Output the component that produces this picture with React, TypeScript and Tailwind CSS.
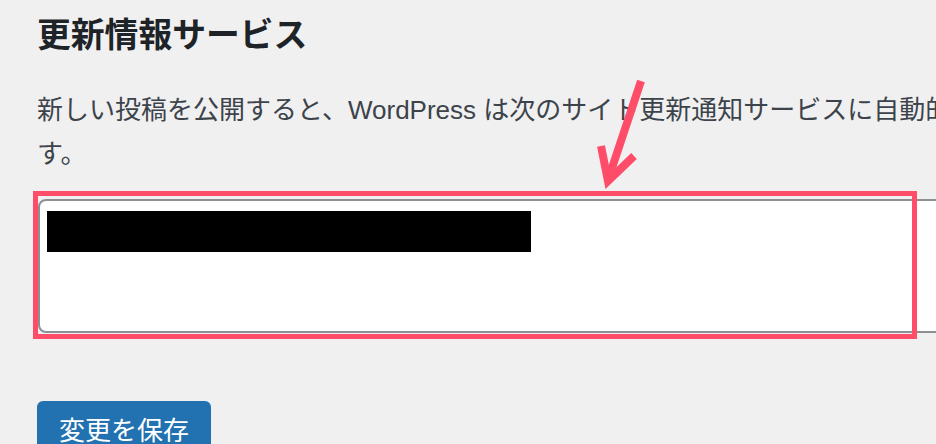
export default function App() {
  return (
    <div
      className="relative w-[936px] h-[444px] overflow-hidden bg-[#f0f0f1] text-[#3c434a]"
      style={{ fontFamily: '"Liberation Sans", "Noto Sans CJK JP", sans-serif' }}
    >
      <div className="w-[1100px] pl-[37px]">
        <h2 className="pt-[18px] text-[33.8px] leading-[34px] font-semibold text-[#1d2327]">
          更新情報サービス
        </h2>

        <p className="mt-[36px] text-[26px] leading-[44px]">
          新しい投稿を公開すると、WordPress は次のサイト更新通知サービスに自動的に通知しま
          <br />
          す。
        </p>

        <div className="mt-[23px] ml-[1px] h-[134px] w-[1000px] rounded-[8px] border-2 border-[#8c8f94] bg-white pl-[7px] pt-[10px]">
          <div className="h-[41px] w-[484px] bg-black" />
        </div>

        <button className="mt-[68px] h-[60px] rounded-[6px] border-2 border-[#2271b1] bg-[#2271b1] px-[20px] text-[26px] leading-[56px] text-white">
          変更を保存
        </button>
      </div>

      {/* annotation overlay */}
      <div className="absolute left-[33px] top-[191px] h-[148px] w-[884px] border-[5px] border-[#fe4c69]" />
      <svg className="absolute left-0 top-0" width="936" height="444" viewBox="0 0 936 444">
        <path d="M641 81 L609 177" stroke="#fe4c69" strokeWidth="8" fill="none" />
        <path d="M601 146 L608 181 L634 156" stroke="#fe4c69" strokeWidth="8" fill="none" strokeLinejoin="miter" />
      </svg>
    </div>
  );
}
